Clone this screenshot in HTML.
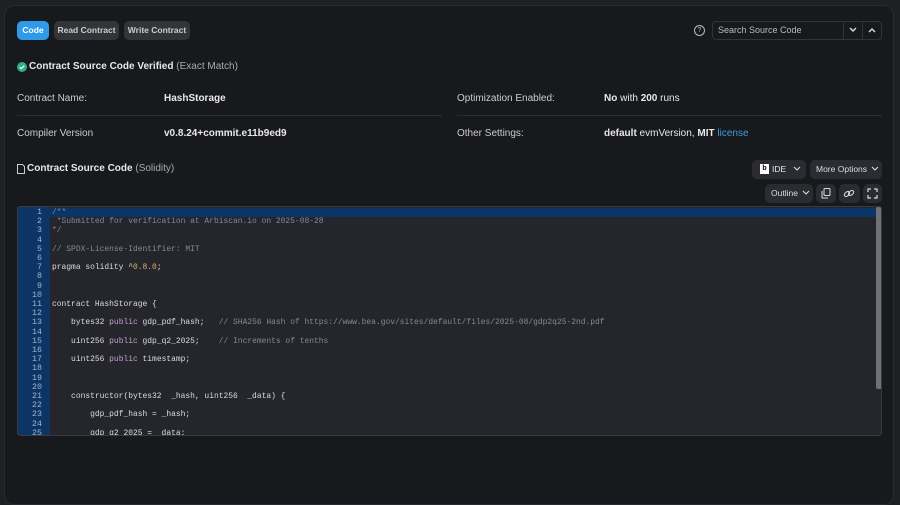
<!DOCTYPE html>
<html><head><meta charset="utf-8"><style>
*{box-sizing:border-box;margin:0;padding:0}
body{width:900px;height:472px;background:#1f2024;font-family:"Liberation Sans",sans-serif;color:#e8e8e8;overflow:hidden;position:relative}
.card{position:absolute;left:4px;top:5px;width:890px;height:500px;background:#18191c;border:1px solid #2a2b30;border-radius:10px}
.abs{position:absolute}
.btn{position:absolute;height:19px;border-radius:5px;font-size:8.5px;font-weight:bold;line-height:19px;text-align:center}
.t{position:absolute;font-size:10px;white-space:nowrap}
.b{font-weight:bold}
.hr{position:absolute;height:1px;background:#2c2d32}
.sbtn{position:absolute;height:19px;background:#2b2c31;border-radius:5px;font-size:8.5px;line-height:19px;color:#ddd;text-align:center}
.ed{position:absolute;left:17px;top:206px;width:865px;height:230px;background:#25262b;border:1px solid #3a3b40;border-radius:3px;overflow:hidden}
.gut{position:absolute;left:0;top:0;width:32px;height:230px;background:#0c3566}
.ln{position:absolute;left:0;width:24px;text-align:right;font-family:"Liberation Mono",monospace;font-size:8.3px;color:#9fb4d0;line-height:9.2px}
.code{position:absolute;left:34px;font-family:"Liberation Mono",monospace;font-size:7.95px;color:#dcdcdc;white-space:pre;line-height:9.2px}
.c{color:#7f8a9a}.k{color:#c59cd6}.n{color:#e0b070}
</style></head><body>
<div class="card"></div>
<div class="btn" style="left:17px;top:21px;width:32px;background:#2e9be8;color:#fff">Code</div>
<div class="btn" style="left:54px;top:21px;width:65px;background:#33343a;color:#ccc">Read Contract</div>
<div class="btn" style="left:124px;top:21px;width:66px;background:#33343a;color:#ccc">Write Contract</div>
<div class="abs" style="left:694px;top:25px;width:11px;height:11px;border:1px solid #bbb;border-radius:50%;font-size:7px;text-align:center;line-height:9px;color:#bbb">?</div>
<div class="abs" style="left:712px;top:21px;width:170px;height:19px;border:1px solid #33343a;border-radius:4px;background:#18191c"></div>
<div class="t" style="left:718px;top:25px;font-size:9px;color:#bbb">Search Source Code</div>
<div class="abs" style="left:843px;top:21px;width:1px;height:19px;background:#33343a"></div>
<div class="abs" style="left:862px;top:21px;width:1px;height:19px;background:#33343a"></div>
<svg class="abs" style="left:848px;top:26px" width="10" height="8"><path d="M2 2l3 3 3-3" stroke="#ddd" stroke-width="1.4" fill="none"/></svg>
<svg class="abs" style="left:867px;top:26px" width="10" height="8"><path d="M2 6l3-3 3 3" stroke="#ddd" stroke-width="1.4" fill="none"/></svg>

<svg class="abs" style="left:17px;top:62px" width="10" height="10"><circle cx="5" cy="5" r="5" fill="#2bb08a"/><path d="M2.8 5.2l1.5 1.5 3-3" stroke="#fff" stroke-width="1.2" fill="none"/></svg>
<div class="t" style="left:29px;top:61px"><span class="b">Contract Source Code Verified</span> <span style="color:#aaa">(Exact Match)</span></div>

<div class="t" style="left:17px;top:93px;color:#ccc">Contract Name:</div>
<div class="t b" style="left:164px;top:93px">HashStorage</div>
<div class="hr" style="left:17px;top:115px;width:425px"></div>
<div class="t" style="left:17px;top:128px;color:#ccc">Compiler Version</div>
<div class="t b" style="left:164px;top:128px">v0.8.24+commit.e11b9ed9</div>
<div class="t" style="left:457px;top:93px;color:#ccc">Optimization Enabled:</div>
<div class="t" style="left:604px;top:93px"><span class="b">No</span> with <span class="b">200</span> runs</div>
<div class="hr" style="left:457px;top:115px;width:425px"></div>
<div class="t" style="left:457px;top:128px;color:#ccc">Other Settings:</div>
<div class="t" style="left:604px;top:128px"><span class="b">default</span> evmVersion, <span class="b">MIT</span> <span style="color:#3c9ee0">license</span></div>

<svg class="abs" style="left:17px;top:164px" width="8" height="10"><path d="M.5.5h5l2 2v7h-7z" stroke="#ccc" fill="none"/></svg>
<div class="t" style="left:27px;top:163px"><span class="b">Contract Source Code</span> <span style="color:#aaa">(Solidity)</span></div>

<div class="sbtn" style="left:752px;top:160px;width:54px"></div>
<div class="abs" style="left:760px;top:164px;width:9px;height:10px;background:#fff;color:#000;font-size:7px;font-weight:bold;text-align:center;line-height:10px">b</div>
<div class="t" style="left:772px;top:164px;font-size:8.5px">IDE</div>
<svg class="abs" style="left:793px;top:166px" width="8" height="6"><path d="M1 1l3 3 3-3" stroke="#ddd" stroke-width="1.1" fill="none"/></svg>
<div class="sbtn" style="left:810px;top:160px;width:72px;text-align:left;padding-left:6px">More Options</div>
<svg class="abs" style="left:871px;top:166px" width="8" height="6"><path d="M1 1l3 3 3-3" stroke="#ddd" stroke-width="1.1" fill="none"/></svg>
<div class="sbtn" style="left:765px;top:184px;width:48px;text-align:left;padding-left:6px">Outline</div>
<svg class="abs" style="left:802px;top:190px" width="8" height="6"><path d="M1 1l3 3 3-3" stroke="#ddd" stroke-width="1.1" fill="none"/></svg>
<div class="sbtn" style="left:816px;top:184px;width:20px"></div>
<svg class="abs" style="left:821px;top:188px" width="10" height="11"><rect x="3" y=".5" width="6" height="7" rx="1" stroke="#ddd" fill="none"/><path d="M1 3v7h6" stroke="#ddd" fill="none"/></svg>
<div class="sbtn" style="left:839px;top:184px;width:21px"></div>
<svg class="abs" style="left:843px;top:188px" width="12" height="11"><ellipse cx="4" cy="6" rx="3" ry="2" transform="rotate(-40 4 6)" stroke="#ddd" fill="none"/><ellipse cx="8" cy="5" rx="3" ry="2" transform="rotate(-40 8 5)" stroke="#ddd" fill="none"/></svg>
<div class="sbtn" style="left:863px;top:184px;width:19px"></div>
<svg class="abs" style="left:867px;top:188px" width="11" height="11"><path d="M1 4V1h3M7 1h3v3M10 7v3H7M4 10H1V7" stroke="#ddd" stroke-width="1.2" fill="none"/></svg>

<div class="ed">
<div class="gut"></div>
<div class="abs" style="left:0;top:1px;width:858px;height:9px;background:#0c3566"></div>
<div class="abs" style="left:858px;top:0;width:6px;height:182px;background:#707177;border-radius:2px"></div>
<div class="ln" style="top:1px">1<br>2<br>3<br>4<br>5<br>6<br>7<br>8<br>9<br>10<br>11<br>12<br>13<br>14<br>15<br>16<br>17<br>18<br>19<br>20<br>21<br>22<br>23<br>24<br>25</div>
<div class="code" style="top:1px"><span class="c">/**
 *Submitted for verification at Arbiscan.io on 2025-08-28
*/

// SPDX-License-Identifier: MIT</span>

pragma solidity ^<span class="n">0.8.0</span>;



contract HashStorage {

    bytes32 <span class="k">public</span> gdp_pdf_hash;   <span class="c">// SHA256 Hash of https://www.bea.gov/sites/default/files/2025-08/gdp2q25-2nd.pdf</span>

    uint256 <span class="k">public</span> gdp_q2_2025;    <span class="c">// Increments of tenths</span>

    uint256 <span class="k">public</span> timestamp;



    constructor(bytes32  _hash, uint256  _data) {

        gdp_pdf_hash = _hash;

        gdp_q2_2025 = _data;</div>
</div>
</body></html>
